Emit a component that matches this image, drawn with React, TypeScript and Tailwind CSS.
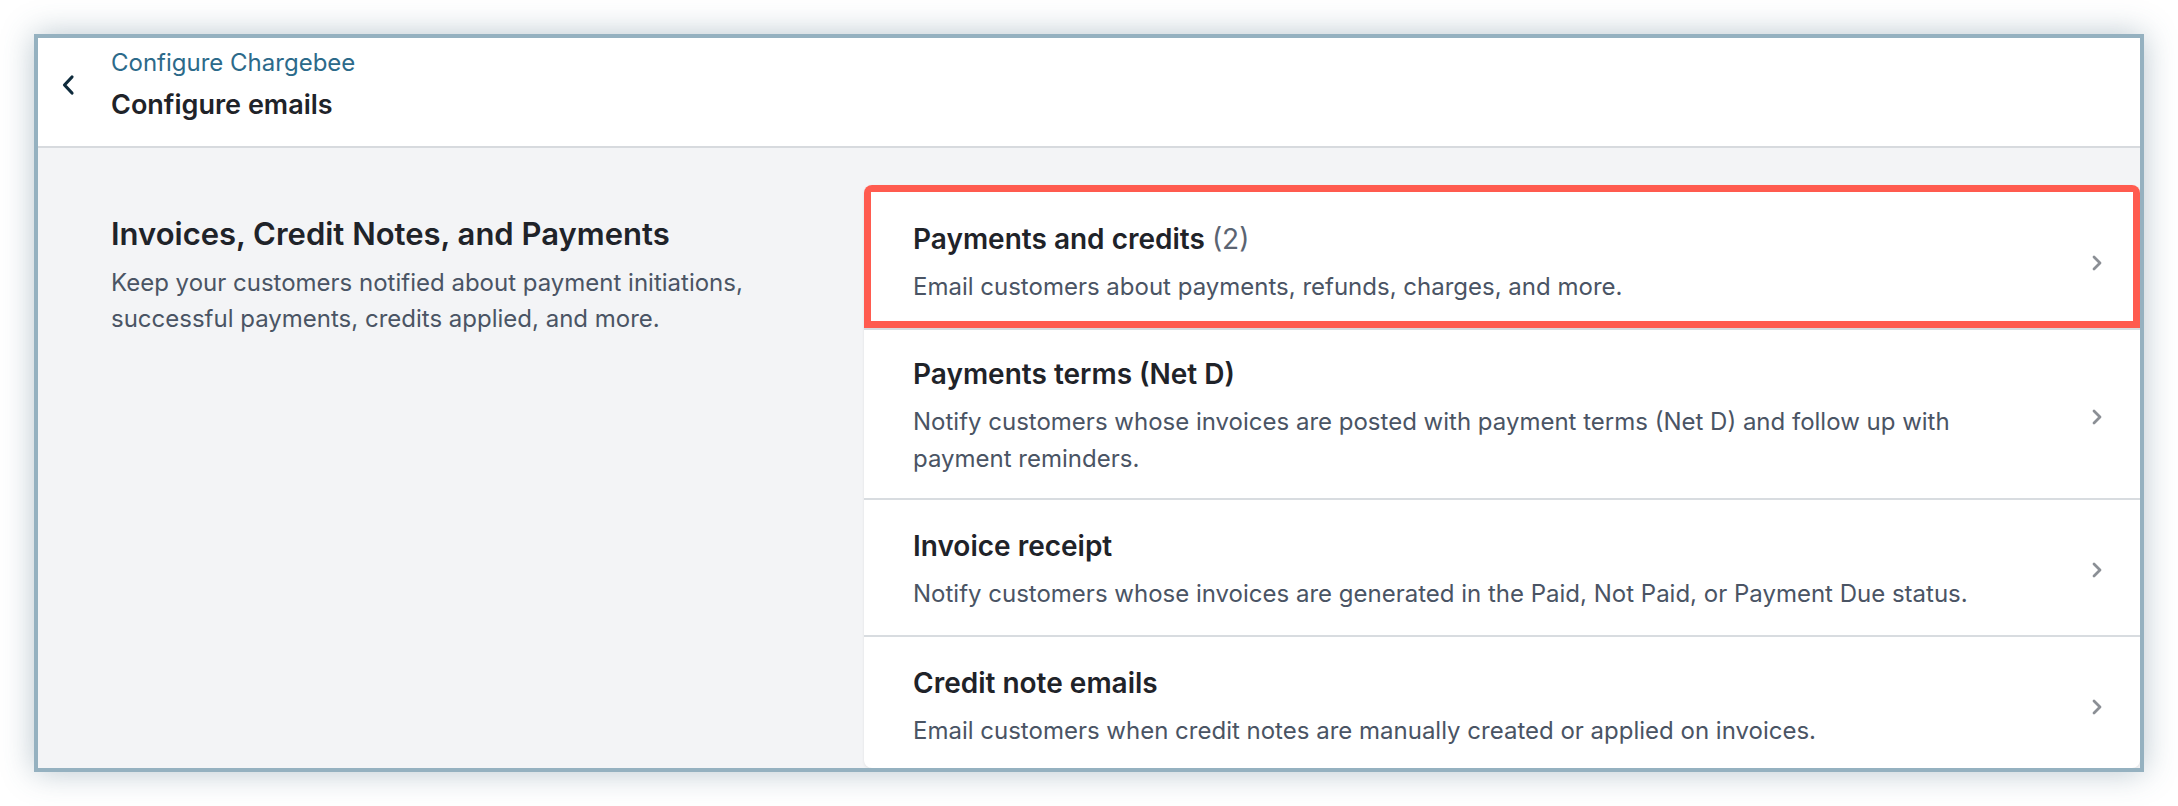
import { ReactNode } from 'react';

function Chevron() {
  return (
    <svg width="12" height="18" viewBox="0 0 12 18" fill="none" className="flex-none">
      <path d="M3 3l6 6-6 6" stroke="#8b8f95" strokeWidth="2.8" strokeLinecap="round" strokeLinejoin="round" />
    </svg>
  );
}

function Row({ title, desc, className }: { title: ReactNode; desc: string; className: string }) {
  return (
    <div className={`flex items-center pl-[49px] pr-[37px] ${className}`}>
      <div className="flex-1">
        <div className="text-[28px] leading-[36px] font-semibold text-[#1f2329]">{title}</div>
        <p className="mt-[11px] max-w-[1080px] text-[24px] leading-[37px] text-[#4a5464]">{desc}</p>
      </div>
      <Chevron />
    </div>
  );
}

export default function App() {
  return (
    <div className="h-[806px] w-[2178px] bg-white p-[34px] font-['Inter',sans-serif]">
      <div className="flex h-full flex-col border-4 border-[#95b1c0] shadow-[0_0_30px_rgba(70,105,125,0.38)]">

        {/* HEADER */}
        <header className="h-[110px] flex-none bg-white border-b-2 border-[#d7dade] pt-[10px]">
          <div className="flex items-center">
            <div className="w-[73px] flex pl-[22px]">
              <svg width="16" height="22" viewBox="0 0 16 22" fill="none">
                <path d="M12 3l-7.5 8 7.5 8" stroke="#0f2b3c" strokeWidth="3.2" strokeLinecap="round" strokeLinejoin="round" />
              </svg>
            </div>
            <div>
              <div className="text-[24px] leading-[30px] text-[#2c6a8a]">Configure Chargebee</div>
              <div className="mt-[10px] text-[27px] leading-[34px] font-semibold text-[#1f2329]">Configure emails</div>
            </div>
          </div>
        </header>

        {/* BODY */}
        <div className="flex min-h-0 flex-1 bg-[#f3f4f6] pl-[73px] pt-[37px] overflow-hidden">
          <div className="w-[753px] flex-none pt-[30px]">
            <h2 className="text-[31px] leading-[38px] font-semibold text-[#1f2329]">
              Invoices, Credit Notes, and Payments
            </h2>
            <p className="mt-[12px] w-[660px] text-[24px] leading-[36px] text-[#4a5464]">
              Keep your customers notified about payment initiations, successful payments, credits applied, and more.
            </p>
          </div>

          <div className="flex-1 h-full overflow-hidden rounded-lg bg-white shadow-[0_1px_3px_rgba(0,0,0,0.08)]">
            <div className="relative">
              <Row
                className="pt-[36px] pb-[23px]"
                title={<>Payments and credits <span className="font-normal text-[#5b6472]">(2)</span></>}
                desc="Email customers about payments, refunds, charges, and more."
              />
              <div className="pointer-events-none absolute inset-0 border-[7px] border-[#ff5b4f]" />
            </div>
            <Row
              className="border-t-2 border-[#d8dce0] pt-[26px] pb-[21px]"
              title="Payments terms (Net D)"
              desc="Notify customers whose invoices are posted with payment terms (Net D) and follow up with payment reminders."
            />
            <Row
              className="border-t-2 border-[#d8dce0] pt-[28px] pb-[23px]"
              title="Invoice receipt"
              desc="Notify customers whose invoices are generated in the Paid, Not Paid, or Payment Due status."
            />
            <Row
              className="border-t-2 border-[#d8dce0] pt-[28px] pb-[23px]"
              title="Credit note emails"
              desc="Email customers when credit notes are manually created or applied on invoices."
            />
          </div>
        </div>
      </div>
    </div>
  );
}
